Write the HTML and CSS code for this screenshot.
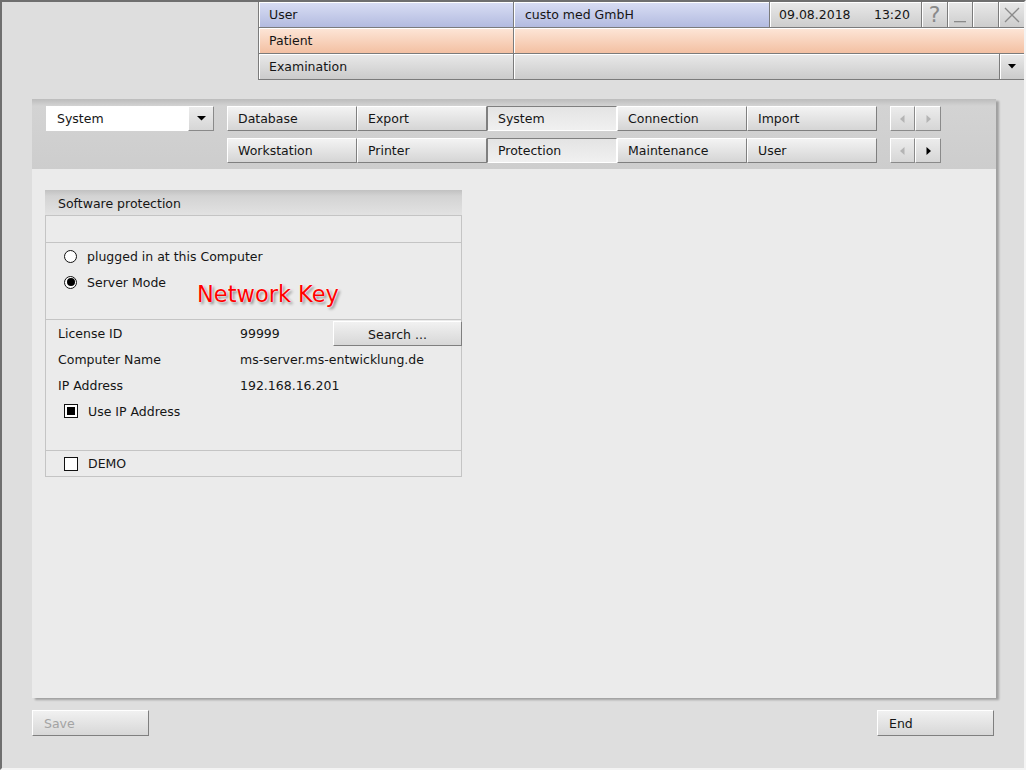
FILE: index.html
```html
<!DOCTYPE html>
<html>
<head>
  <meta charset="UTF-8">
  <link rel="stylesheet" href="styles.css">
</head>
<body>
  <div class="window">
    <div class="topbar">
      <div class="topbar-spacer"></div>
      <div class="info">
        <div class="info-row row-user">
          <div class="cell cell-label">User</div>
          <div class="cell cell-value">custo med GmbH</div>
          <div class="cell cell-clock"><span>09.08.2018</span><span>13:20</span></div>
          <div class="cell cell-icon icon-help">?</div>
          <div class="cell cell-icon icon-min">
            <svg width="12" height="2" viewBox="0 0 12 2"><rect x="0" y="0" width="12" height="1.3" fill="#8a8a8a"/></svg>
          </div>
          <div class="cell cell-icon icon-blank"></div>
          <div class="cell cell-icon icon-close">
            <svg width="16" height="16" viewBox="0 0 16 16"><path d="M1 1 L15 15 M15 1 L1 15" stroke="#8a8a8a" stroke-width="1.3" fill="none"/></svg>
          </div>
        </div>
        <div class="info-row row-patient">
          <div class="cell cell-label">Patient</div>
          <div class="cell cell-fill"></div>
        </div>
        <div class="info-row row-exam">
          <div class="cell cell-label">Examination</div>
          <div class="cell cell-fill"></div>
          <div class="cell cell-icon icon-drop">
            <svg width="8" height="5" viewBox="0 0 8 5"><path d="M0 0 H8 L4 4.5 Z" fill="#000"/></svg>
          </div>
        </div>
      </div>
    </div>

    <div class="panel">
      <div class="tabbar">
        <div class="tab-row">
          <div class="tab-lead">
            <div class="select-box">System</div>
            <div class="select-arrow">
              <svg width="9" height="5" viewBox="0 0 9 5"><path d="M0 0 H9 L4.5 4.5 Z" fill="#000"/></svg>
            </div>
          </div>
          <div class="tabs">
            <div class="tab">Database</div>
            <div class="tab">Export</div>
            <div class="tab active">System</div>
            <div class="tab">Connection</div>
            <div class="tab">Import</div>
          </div>
          <div class="tab-nav">
            <div class="nav-btn">
              <svg width="5" height="8" viewBox="0 0 5 8"><path d="M4.5 0 V8 L0 4 Z" fill="#b4b4b4"/></svg>
            </div>
            <div class="nav-btn">
              <svg width="5" height="8" viewBox="0 0 5 8"><path d="M0.5 0 V8 L5 4 Z" fill="#b4b4b4"/></svg>
            </div>
          </div>
        </div>
        <div class="tab-row">
          <div class="tab-lead"></div>
          <div class="tabs">
            <div class="tab">Workstation</div>
            <div class="tab">Printer</div>
            <div class="tab active">Protection</div>
            <div class="tab">Maintenance</div>
            <div class="tab">User</div>
          </div>
          <div class="tab-nav">
            <div class="nav-btn">
              <svg width="5" height="8" viewBox="0 0 5 8"><path d="M4.5 0 V8 L0 4 Z" fill="#b4b4b4"/></svg>
            </div>
            <div class="nav-btn">
              <svg width="5" height="8" viewBox="0 0 5 8"><path d="M0.5 0 V8 L5 4 Z" fill="#000"/></svg>
            </div>
          </div>
        </div>
      </div>

      <div class="panel-body">
        <div class="group">
          <div class="group-title">Software protection</div>
          <div class="group-box">
            <div class="section section-empty"></div>

            <div class="section section-radio">
              <div class="option-row">
                <span class="radio"></span>
                <span class="option-label">plugged in at this Computer</span>
              </div>
              <div class="option-row">
                <span class="radio checked"></span>
                <span class="option-label">Server Mode</span>
              </div>
              <div class="note">Network Key</div>
            </div>

            <div class="section section-info">
              <div class="info-line">
                <span class="field-label">License ID</span>
                <span class="field-value">99999</span>
                <button class="btn btn-search">Search ...</button>
              </div>
              <div class="info-line">
                <span class="field-label">Computer Name</span>
                <span class="field-value">ms-server.ms-entwicklung.de</span>
              </div>
              <div class="info-line">
                <span class="field-label">IP Address</span>
                <span class="field-value">192.168.16.201</span>
              </div>
              <div class="option-row">
                <span class="checkbox checked"></span>
                <span class="option-label">Use IP Address</span>
              </div>
            </div>

            <div class="section section-demo">
              <div class="option-row">
                <span class="checkbox"></span>
                <span class="option-label">DEMO</span>
              </div>
            </div>
          </div>
        </div>
      </div>
    </div>

    <div class="footer">
      <button class="btn btn-footer disabled">Save</button>
      <button class="btn btn-footer">End</button>
    </div>
  </div>
</body>
</html>
```

FILE: styles.css
```css
body {
  margin: 0;
  font-family: "DejaVu Sans", Tahoma, sans-serif;
  font-size: 12.5px;
  color: #151515;
  background: #dedede;
}

.window {
  width: 1026px;
  height: 770px;
  box-sizing: border-box;
  background: #dedede;
  border-top: 2px solid #6f6f6f;
  border-left: 2px solid #6f6f6f;
  border-right: 2px solid #f4f4f4;
  border-bottom: 2px solid #f4f4f4;
}

/* top info bar */

.topbar {
  display: flex;
  height: 78px;
}

.topbar-spacer {
  width: 256px;
}

.info {
  flex: 1;
  border-left: 1px solid #7b7b7b;
}

.info-row {
  display: flex;
  height: 26px;
}

.cell {
  box-sizing: border-box;
  height: 26px;
  line-height: 26px;
  border-right: 1px solid #7b7b7b;
  border-bottom: 1px solid #7b7b7b;
  box-shadow: inset 1px 1px 0 #ffffff;
  white-space: nowrap;
  overflow: hidden;
}

.cell-label {
  width: 255px;
  padding-left: 10px;
}

.cell-value {
  width: 256px;
  padding-left: 11px;
}

.cell-fill {
  flex: 1;
}

.cell-clock {
  width: 152px;
  padding: 0 11px 0 9px;
  display: flex;
  justify-content: space-between;
  background: linear-gradient(#e9e9e9, #cdcdcd);
}

.cell-icon {
  width: 26px;
  display: flex;
  align-items: center;
  justify-content: center;
  background: linear-gradient(#e9e9e9, #cdcdcd);
}

.icon-help {
  font-size: 22px;
  color: #8a8a8a;
  line-height: 26px;
}

.icon-min {
  width: 25px;
  align-items: flex-end;
  padding-bottom: 4px;
}

.icon-close {
  width: 25px;
  border-right: none;
}

.icon-drop {
  width: 24px;
  border-right: none;
}

.row-user .cell-label,
.row-user .cell-value {
  background: linear-gradient(#d9def4, #b3bbe0);
}

.row-patient .cell {
  background: linear-gradient(#fde6d8, #f3c0a2);
}

.row-patient .cell-fill {
  border-right: none;
}

.row-exam .cell {
  background: linear-gradient(#e9e9e9, #cbcbcb);
}

/* main panel */

.panel {
  margin: 19px 0 0 30px;
  width: 964px;
  height: 599px;
  background: #ebebeb;
  box-shadow: 3px 2px 2px rgba(0, 0, 0, 0.28);
  display: flex;
  flex-direction: column;
}

.tabbar {
  height: 70px;
  box-sizing: border-box;
  padding: 7px 0 0 14px;
  background: linear-gradient(#bcbcbc 0px, #d3d3d3 7px, #d0d0d0 40px, #cdcdcd 70px);
  display: flex;
  flex-direction: column;
  gap: 7px;
}

.tab-row {
  display: flex;
  height: 25px;
}

.tab-lead {
  width: 181px;
  display: flex;
}

.select-box {
  width: 142px;
  box-sizing: border-box;
  background: #ffffff;
  padding-left: 11px;
  line-height: 25px;
}

.select-arrow,
.nav-btn {
  width: 26px;
  box-sizing: border-box;
  display: flex;
  align-items: center;
  justify-content: center;
  border-top: 1px solid #ffffff;
  border-left: 1px solid #ffffff;
  border-right: 1px solid #8a8a8a;
  border-bottom: 1px solid #8a8a8a;
  background: linear-gradient(#ececec, #d6d6d6);
}

.tabs {
  display: flex;
}

.tab {
  width: 130px;
  box-sizing: border-box;
  padding-left: 10px;
  line-height: 23px;
  border-top: 1px solid #ffffff;
  border-left: 1px solid #ffffff;
  border-right: 1px solid #7f7f7f;
  border-bottom: 1px solid #7f7f7f;
  background: linear-gradient(#f3f3f3, #d5d5d5);
}

.tab.active {
  border-top-color: #7f7f7f;
  border-left-color: #7f7f7f;
  border-right-color: #ffffff;
  border-bottom-color: #ffffff;
  background: linear-gradient(#e4e4e4, #f0f0f0);
}

.tab-nav {
  display: flex;
  margin-left: 13px;
}

.nav-btn:first-child {
  width: 25px;
}

.panel-body {
  flex: 1;
  padding: 21px 0 0 13px;
}

/* group box */

.group {
  width: 417px;
}

.group-title {
  height: 25px;
  line-height: 27px;
  padding-left: 13px;
  background: linear-gradient(#c1c1c1 0px, #d3d3d3 6px, #e2e2e2 25px);
}

.group-box {
  border: 1px solid #c4c4c4;
}

.section {
  border-bottom: 1px solid #c4c4c4;
}

.section:last-child {
  border-bottom: none;
}

.section-empty {
  height: 26px;
}

.section-radio {
  position: relative;
  height: 76px;
}

.section-info {
  height: 130px;
}

.section-demo {
  height: 25px;
}

.option-row {
  display: flex;
  align-items: center;
  height: 26px;
  padding-left: 18px;
}

.section-demo .option-row {
  height: 25px;
}

.option-label {
  margin-left: 10px;
}

.radio {
  width: 13px;
  height: 13px;
  box-sizing: border-box;
  border: 1px solid #111;
  border-radius: 50%;
  background: #ffffff;
  position: relative;
}

.radio.checked::after {
  content: '';
  position: absolute;
  left: 1.5px;
  top: 1.5px;
  width: 8px;
  height: 8px;
  border-radius: 50%;
  background: #000;
}

.checkbox {
  width: 14px;
  height: 14px;
  box-sizing: border-box;
  border: 1px solid #111;
  background: #ffffff;
  position: relative;
}

.checkbox.checked::after {
  content: '';
  position: absolute;
  inset: 2px;
  background: #000;
}

.note {
  position: absolute;
  left: 151px;
  top: 38px;
  font-size: 22.5px;
  line-height: 26px;
  color: #ff0000;
  text-shadow: 0 0 1px #fff, 0 0 2px #fff, 2px 2px 3px rgba(0, 0, 0, 0.45);
}

.info-line {
  display: flex;
  align-items: center;
  height: 26px;
  padding-left: 12px;
}

.field-label {
  width: 182px;
}

.btn {
  font-family: inherit;
  font-size: 12.5px;
  color: #151515;
  box-sizing: border-box;
  height: 25px;
  padding: 0;
  border-top: 1px solid #ffffff;
  border-left: 1px solid #ffffff;
  border-right: 1px solid #7f7f7f;
  border-bottom: 1px solid #7f7f7f;
  border-radius: 0;
  background: linear-gradient(#f1f1f1, #d7d7d7);
}

.btn-search {
  width: 129px;
  margin: 1px -1px 0 auto;
  padding-top: 2px;
}

/* footer */

.footer {
  display: flex;
  justify-content: space-between;
  padding: 12px 30px 0 30px;
}

.btn-footer {
  width: 117px;
  height: 26px;
  text-align: left;
  padding-left: 11px;
}

.btn-footer.disabled {
  color: #a3a3a3;
}
```
